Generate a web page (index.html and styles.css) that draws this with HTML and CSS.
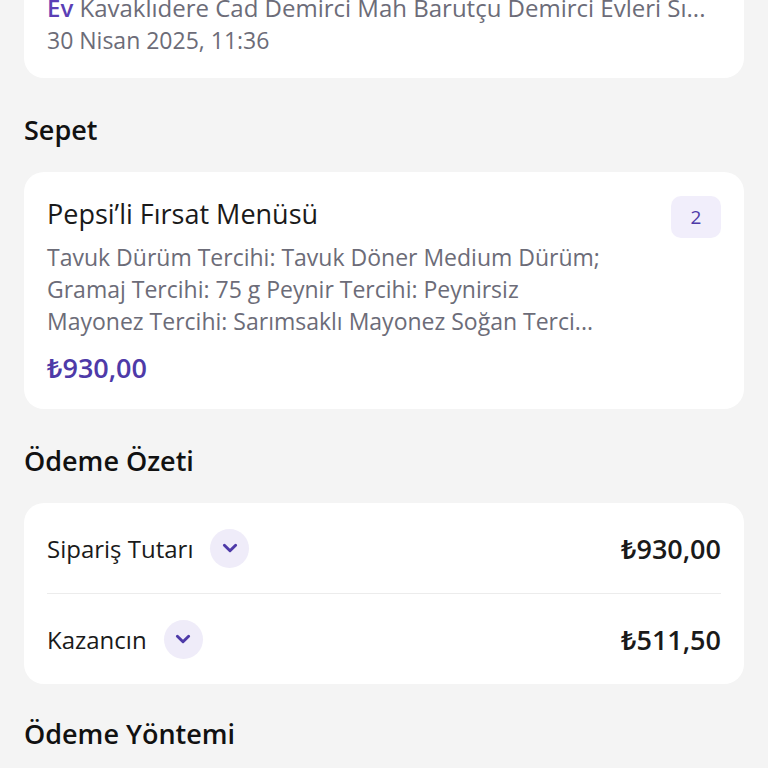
FILE: index.html
```html
<!DOCTYPE html>
<html lang="tr">
<head>
  <meta charset="UTF-8" />
  <meta name="viewport" content="width=device-width, initial-scale=1.0">
  <title>Sipariş Detayı</title>
  <link rel="stylesheet" href="styles.css">
</head>
<body>
  <div class="page">
    <!-- Address card, top part scrolled away -->
    <div class="card address-card">
      <div class="address"><span class="tag">Ev</span> Kavaklıdere Cad Demirci Mah Barutçu Demirci Evleri Sı...</div>
      <div class="date">30 Nisan 2025, 11:36</div>
    </div>

    <h2 class="section-title">Sepet</h2>
    <div class="card basket-card">
      <div class="basket-head">
        <div class="product-name">Pepsi’li Fırsat Menüsü</div>
        <div class="qty">2</div>
      </div>
      <div class="product-desc">
        Tavuk Dürüm Tercihi: Tavuk Döner Medium Dürüm;<br>
        Gramaj Tercihi: 75 g Peynir Tercihi: Peynirsiz<br>
        Mayonez Tercihi: Sarımsaklı Mayonez Soğan Terci...
      </div>
      <div class="product-price">₺930,00</div>
    </div>

    <h2 class="section-title">Ödeme Özeti</h2>
    <div class="card summary-card">
      <div class="summary-row">
        <div class="summary-label">
          <span>Sipariş Tutarı</span>
          <span class="chevron">
            <svg width="18" height="18" viewBox="0 0 16 16"><path d="M3 5.5 L8 10.5 L13 5.5" fill="none" stroke="#4e3aa8" stroke-width="2.6" stroke-linecap="round" stroke-linejoin="round"/></svg>
          </span>
        </div>
        <div class="summary-value">₺930,00</div>
      </div>
      <div class="summary-row">
        <div class="summary-label">
          <span>Kazancın</span>
          <span class="chevron">
            <svg width="18" height="18" viewBox="0 0 16 16"><path d="M3 5.5 L8 10.5 L13 5.5" fill="none" stroke="#4e3aa8" stroke-width="2.6" stroke-linecap="round" stroke-linejoin="round"/></svg>
          </span>
        </div>
        <div class="summary-value">₺511,50</div>
      </div>
    </div>

    <h2 class="section-title last">Ödeme Yöntemi</h2>
  </div>
</body>
</html>
```

FILE: styles.css
```css
body {
  margin: 0;
  background: #f4f4f4;
  font-family: "Open Sans", "Noto Sans", sans-serif;
  color: #1a1a1a;
  overflow: hidden;
}

.page {
  padding: 0 24px;
}

.card {
  background: white;
  border-radius: 20px;
}

.address-card {
  margin-top: -32px;
  padding: 24px 23px 22px;
}

.address,
.date {
  font-size: 23px;
  line-height: 32px;
  color: #6c6c78;
  white-space: nowrap;
  overflow: hidden;
}

.address {
  font-size: 24px;
}

.tag {
  color: #5a3fb5;
  font-weight: 600;
}

.section-title {
  margin: 35px 0 25px;
  font-size: 27px;
  line-height: 34px;
  font-weight: 600;
  color: #111;
}

.section-title.last {
  margin-top: 33px;
}

.basket-card {
  padding: 25px 23px 25px;
}

.basket-head {
  display: flex;
  justify-content: space-between;
  align-items: flex-start;
  height: 34px;
}

.product-name {
  font-size: 27px;
  line-height: 34px;
  color: #1a1a1a;
}

.qty {
  width: 50px;
  height: 42px;
  margin-top: -1px;
  border-radius: 10px;
  background: #f1eefb;
  color: #4e3aa8;
  font-size: 19px;
  font-weight: 500;
  display: flex;
  align-items: center;
  justify-content: center;
}

.product-desc {
  margin-top: 10px;
  font-size: 23px;
  line-height: 32px;
  color: #6c6c78;
}

.product-price {
  margin-top: 15px;
  font-size: 27px;
  line-height: 32px;
  font-weight: 600;
  color: #4e3aa8;
}

.summary-card {
  padding: 0 23px;
}

.summary-row {
  height: 90px;
  display: flex;
  align-items: center;
  justify-content: space-between;
}

.summary-row + .summary-row {
  border-top: 1px solid #ececec;
}

.summary-label {
  display: flex;
  align-items: center;
  gap: 17px;
  font-size: 24px;
  font-weight: 500;
}

.chevron {
  width: 39px;
  height: 39px;
  border-radius: 50%;
  background: #efecf9;
  display: flex;
  align-items: center;
  justify-content: center;
}

.summary-value {
  font-size: 27px;
  font-weight: 600;
}
```
